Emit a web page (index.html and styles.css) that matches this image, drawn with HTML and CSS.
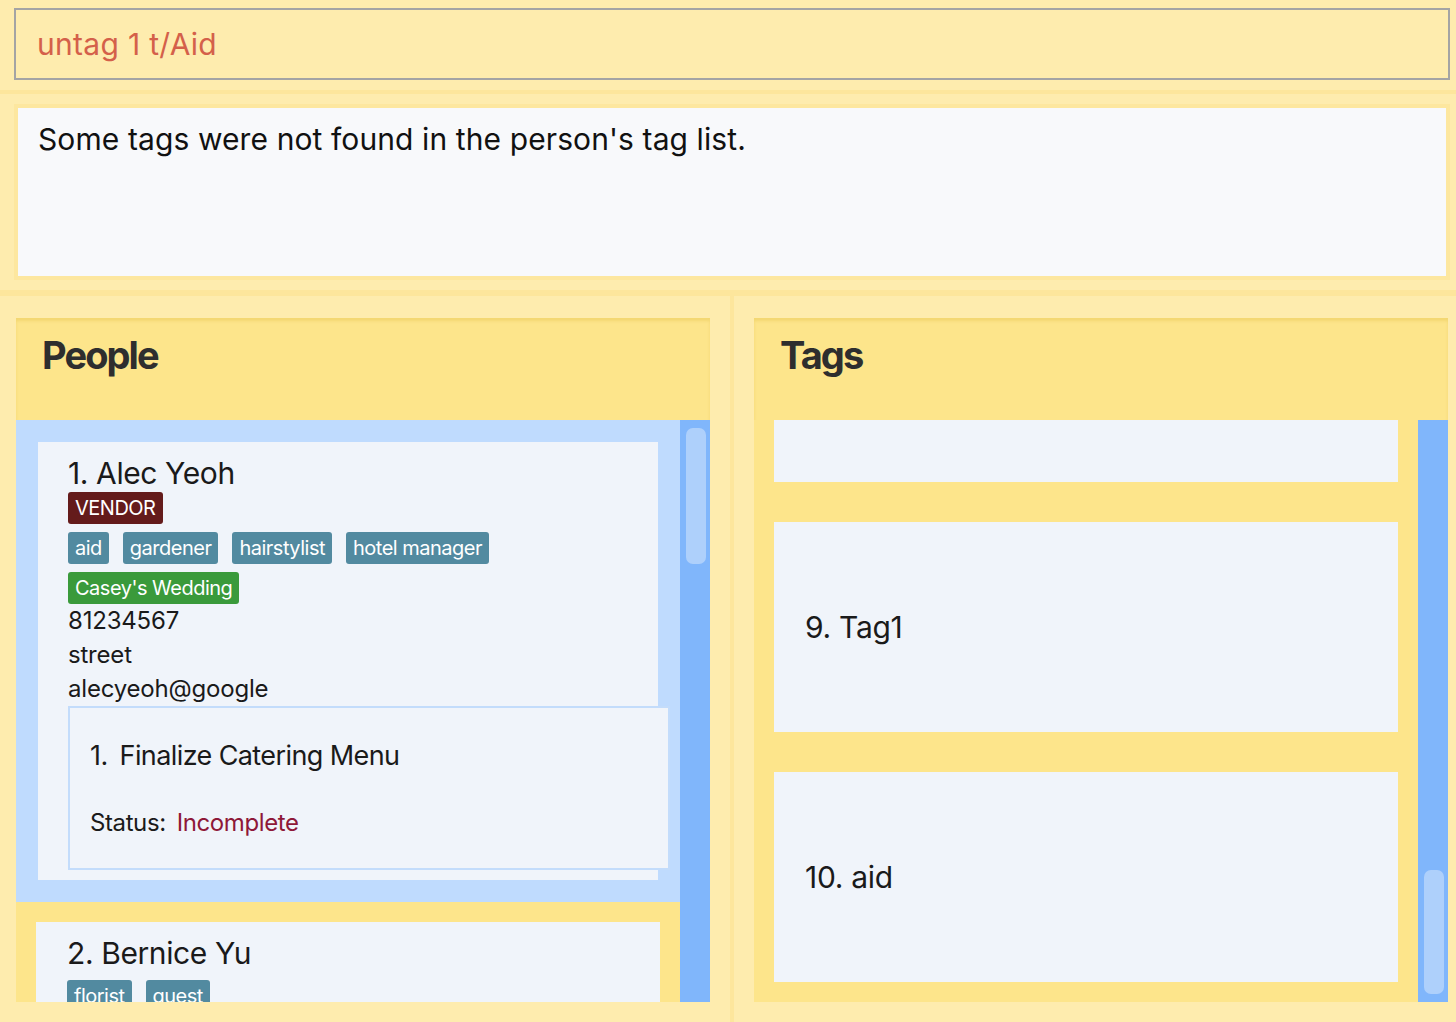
FILE: index.html
```html
<!DOCTYPE html>
<html>
<head>
<meta charset="utf-8">
<link rel="stylesheet" href="styles.css">
</head>
<body>
<div class="app">
  <div class="cmd-wrap">
    <div class="cmd">untag 1 t/Aid</div>
  </div>
  <div class="divider-h"></div>
  <div class="result-wrap">
    <div class="result">Some tags were not found in the person's tag list.</div>
  </div>
  <div class="divider-h thick"></div>
  <div class="main">
    <div class="panel people">
      <div class="panel-header"><h1>People</h1></div>
      <div class="panel-body">
        <div class="list">
          <div class="cell selected">
            <div class="card">
              <div class="name">1. Alec Yeoh</div>
              <div class="tag-rows">
                <div class="tag-row"><span class="tag role">VENDOR</span></div>
                <div class="tag-row">
                  <span class="tag">aid</span>
                  <span class="tag">gardener</span>
                  <span class="tag">hairstylist</span>
                  <span class="tag">hotel manager</span>
                </div>
                <div class="tag-row"><span class="tag wedding">Casey's Wedding</span></div>
              </div>
              <div class="detail">81234567</div>
              <div class="detail">street</div>
              <div class="detail">alecyeoh@google</div>
              <div class="task">
                <div class="task-title"><span class="num">1.</span>Finalize Catering Menu</div>
                <div class="task-status"><span class="label">Status:</span><span class="incomplete">Incomplete</span></div>
              </div>
            </div>
          </div>
          <div class="cell">
            <div class="card second">
              <div class="name">2. Bernice Yu</div>
              <div class="tag-rows">
                <div class="tag-row">
                  <span class="tag">florist</span>
                  <span class="tag">guest</span>
                </div>
              </div>
            </div>
          </div>
        </div>
        <div class="scrollbar"><div class="thumb top"></div></div>
      </div>
    </div>
    <div class="divider-v"></div>
    <div class="panel tags">
      <div class="panel-header"><h1>Tags</h1></div>
      <div class="panel-body">
        <div class="list tag-list">
          <div class="tag-card partial"></div>
          <div class="tag-card">9. Tag1</div>
          <div class="tag-card">10. aid</div>
        </div>
        <div class="scrollbar bottom-thumb"><div class="thumb low"></div></div>
      </div>
    </div>
  </div>
</div>
</body>
</html>
```

FILE: styles.css
```css
* { box-sizing: border-box; }
html, body { margin: 0; padding: 0; }
body {
  background: #feecae;
  font-family: Inter, "Noto Sans", "Liberation Sans", sans-serif;
  color: #1d1d1f;
  width: 1456px;
  height: 1022px;
  overflow: hidden;
}
.app { display: flex; flex-direction: column; height: 1022px; }

.cmd-wrap { padding: 8px 6px 10px 14px; }
.cmd {
  height: 72px;
  border: 2px solid #a4a4a4;
  padding-left: 21px;
  font-size: 30px;
  line-height: 68px;
  color: #d4604a;
  letter-spacing: 0.3px;
}

.divider-h { height: 4px; background: #fde69c; }
.divider-h.thick { height: 6px; }

.result-wrap { padding: 10px 6px 10px 14px; }
.result {
  height: 176px;
  border: 4px solid #fde79f;
  background: #f8f9fb;
  padding: 12px 20px;
  font-size: 30px;
  line-height: 38px;
  letter-spacing: 0.1px;
  color: #111;
}

.main {
  flex: 1;
  display: flex;
  padding: 22px 8px 20px 16px;
  min-height: 0;
}
.divider-v {
  width: 4px;
  margin: -22px 20px -20px 20px;
  background: #fde69c;
}
.panel { display: flex; flex-direction: column; min-height: 0; }
.panel.people { width: 694px; }
.panel.tags { width: 694px; }

.panel-header {
  height: 102px;
  background: #fde58b;
  box-shadow: inset 0 3px 3px rgba(214, 176, 40, 0.25);
  padding: 0 26px;
}
.panel-header h1 {
  margin: 0;
  font-size: 38px;
  font-weight: 700;
  line-height: 74px;
  letter-spacing: -1.9px;
  color: #2e2e2e;
}

.panel-body {
  flex: 1;
  display: flex;
  min-height: 0;
  overflow: hidden;
}
.list { flex: 1; overflow: hidden; background: #fde58b; }

.scrollbar {
  width: 30px;
  background: #80b6fb;
  padding: 8px 4px 0 6px;
  display: flex;
  flex-direction: column;
}
.scrollbar.bottom-thumb { justify-content: flex-end; padding: 0 4px 8px 6px; }
.thumb { background: #aed0fb; border-radius: 7px; }
.thumb.top { height: 136px; }
.thumb.low { height: 124px; }

.cell { padding: 20px 20px 0 20px; }
.cell.selected { background: #bfdbfe; padding: 22px; }
.card {
  background: #f0f4fa;
  padding: 12px 0 10px 30px;
}
.card.second { padding-top: 12px; padding-left: 31px; height: 120px; }
.card.second .tag-rows { margin-top: 8px; }
.name {
  font-size: 30px;
  line-height: 38px;
  letter-spacing: -0.4px;
  color: #1a1a1a;
}
.tag-rows { display: flex; flex-direction: column; gap: 8px; }
.tag-row { display: flex; gap: 14px; }
.tag {
  height: 32px;
  padding: 0 7px;
  border-radius: 3px;
  background: #528aa0;
  color: #fff;
  font-size: 20px;
  line-height: 32px;
  letter-spacing: -0.5px;
}
.tag.role { background: #641b1b; }
.tag.wedding { background: #3a9a3b; }
.detail {
  font-size: 24px;
  line-height: 34px;
  letter-spacing: -0.2px;
  color: #1a1a1a;
}
.task {
  margin-right: -12px;
  height: 164px;
  border: 2px solid #c3dcfb;
  background: #f0f4fa;
  padding: 28px 20px 0 20px;
}
.task-title {
  font-size: 27px;
  line-height: 40px;
  letter-spacing: -0.6px;
  color: #1a1a1a;
}
.task-title .num { margin-right: 12px; }
.task-status {
  margin-top: 31px;
  font-size: 24px;
  line-height: 32px;
  letter-spacing: -0.4px;
  color: #1a1a1a;
}
.task-status .label { margin-right: 11px; }
.incomplete { color: #8e1838; }

.tag-list { padding: 0 20px; display: flex; flex-direction: column; gap: 40px; }
.tag-card {
  flex: none;
  height: 210px;
  background: #f0f4fa;
  padding-left: 31px;
  display: flex;
  align-items: center;
  font-size: 30px;
  letter-spacing: -0.3px;
  color: #1a1a1a;
}
.tag-card.partial { height: 62px; }
```
